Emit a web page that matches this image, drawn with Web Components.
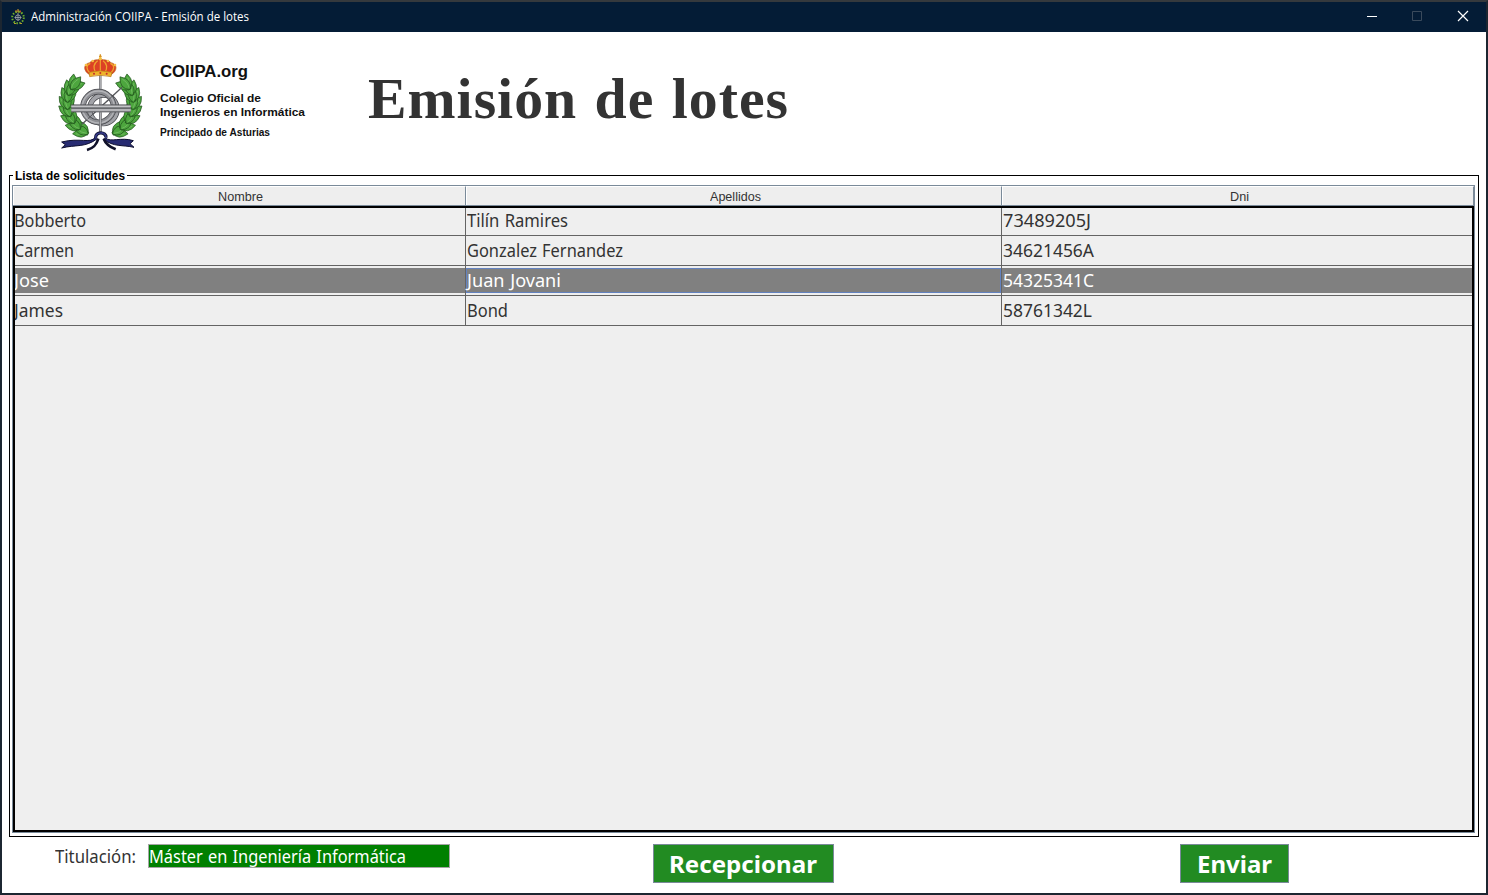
<!DOCTYPE html>
<html lang="es">
<head>
<meta charset="utf-8">
<title>Administración COIIPA - Emisión de lotes</title>
<style>
html,body{margin:0;height:100%;overflow:hidden;background:#1c2127}
</style>
</head>
<body>
<app-window></app-window>
<script>
const define=(name,html,init)=>customElements.define(name,class extends HTMLElement{
  constructor(){super();this.attachShadow({mode:'open'}).innerHTML=html;}
  connectedCallback(){if(init)init.call(this,this.shadowRoot);}
});

/* Text run whose glyphs are condensed or widened to fill the width given in "w". */
define('fit-text',`<style>:host{display:inline-block;white-space:pre}span{display:inline-block;transform-origin:0 0}</style><span><slot></slot></span>`,function(r){
  const s=r.querySelector('span'),w=+this.getAttribute('w');
  this.style.width=w+'px';
  s.style.transform='scaleX('+w/s.getBoundingClientRect().width+')';
});

define('coiipa-emblem',`<style>:host{display:block}svg{display:block;width:100%;height:100%}</style>
<svg viewBox="0 0 300 318">
 <g fill="none" stroke="#2f7a29" stroke-width="14"><path d="M112 250C36 215 38 120 86 96"/><path d="M190 250C266 215 264 120 216 96"/></g>
 <g id="leaves" fill="#4da63e" stroke="#1b4a18" stroke-width="1.8"></g>
 <path d="M96 223L216 112" stroke="#55565a" stroke-width="4"/>
 <path d="M151 76V250" stroke="#66676b" stroke-width="7"/><path d="M151 76V250" stroke="#b9babd" stroke-width="3"/>
 <g fill="none">
  <ellipse cx="160" cy="178" rx="41" ry="43" stroke="#45464b" stroke-width="16"/>
  <ellipse cx="160" cy="178" rx="41" ry="43" stroke="#a2a3a8" stroke-width="12"/>
  <ellipse cx="145" cy="171" rx="46" ry="46" stroke="#45464b" stroke-width="17"/>
  <ellipse cx="145" cy="171" rx="46" ry="46" stroke="#8e8f94" stroke-width="13"/>
  <ellipse cx="145" cy="171" rx="48" ry="48" stroke="#b4b5b9" stroke-width="4"/>
 </g>
 <path d="M113 207L190 136" stroke="#55565a" stroke-width="3"/>
 <path d="M64 165H242V186H64Z" fill="#88898d"/>
 <path d="M64 169H242M64 180H242" stroke="#c3c4c7" stroke-width="4"/>
 <path d="M64 164H242M64 175H242M64 186H242" stroke="#4f5054" stroke-width="2"/>
 <path d="M151 188V250" stroke="#66676b" stroke-width="7"/><path d="M151 188V250" stroke="#c2c3c6" stroke-width="3"/>
 <path d="M147 19h8M151 13v14" stroke="#d89325" stroke-width="4"/>
 <path d="M119 74C98 62 100 42 119 38C128 29 139 30 151 28C163 30 175 29 183 38C202 42 204 62 183 74Z" fill="#dc4225" stroke="#b86920" stroke-width="2"/>
 <path d="M121 70C107 57 108 45 121 40M137 68C129 53 130 41 143 32M165 68C173 53 172 41 159 32M181 70C195 57 194 45 181 40M151 29V68" fill="none" stroke="#efa52d" stroke-width="3.500"/>
 <path d="M117 67Q151 58 186 67L183 80Q151 72 119 80Z" fill="#efb32c" stroke="#b47618" stroke-width="2"/>
 <g fill="#f7c045"><circle cx="108" cy="45" r="4"/><circle cx="128" cy="33" r="4"/><circle cx="151" cy="26" r="5"/><circle cx="174" cy="33" r="4"/><circle cx="195" cy="45" r="4"/></g>
 <g fill="#c72e2a"><circle cx="132" cy="71" r="3"/><circle cx="151" cy="69" r="3"/><circle cx="170" cy="71" r="3"/></g>
 <g fill="none" stroke-linejoin="round">
  <path d="M136 262C120 282 90 262 35 276L46 284L35 294C78 283 104 294 142 266M165 263C183 279 212 260 250 272L240 281L252 292C218 284 190 292 160 267" fill="#272b72" stroke="#0d0e30" stroke-width="3"/>
  <path d="M137 264C134 244 170 244 168 263" stroke="#0d0e30" stroke-width="10"/>
  <path d="M137 264C134 244 170 244 168 263" stroke="#353a87" stroke-width="5"/>
  <path d="M145 266C140 284 132 294 111 300M161 266C167 282 177 290 197 298" stroke="#101129" stroke-width="8"/>
 </g>
</svg>`,function(r){
  const B=(t,a,b,c,d)=>(1-t)**3*a+3*(1-t)**2*t*b+3*(1-t)*t*t*c+t**3*d;
  const P=t=>[B(t,112,36,38,86),B(t,250,215,120,96)];
  let h='';
  for(let i=0;i<=7;i++){
    const t=.02+i*.118,[x,y]=P(t),[u,v]=P(t+.01),a=Math.atan2(v-y,u-x)*180/Math.PI;
    for(const k of [-33,33,0]){
      h+=`<g transform="translate(${x} ${y}) rotate(${a+k})"><path d="M-9 0Q12 -25 40 0Q12 25 -9 0Z"/><path d="M-3 -1Q12 -8 30 -1" fill="none" stroke="#7cbf6b" stroke-width="2"/></g>`;
    }
  }
  r.querySelector('#leaves').innerHTML=h+`<g transform="translate(302 0) scale(-1 1)">${h}</g>`;
});

define('title-bar',`<style>
:host{display:flex;height:30px;background:#041c36;color:#fff;font:12px/30px "Open Sans",sans-serif;align-items:center}
.mark{width:16px;height:16px;margin:0 5px 0 8px}
fit-text{height:30px}
.btns{margin:0 -1px 0 auto;display:flex}
.btns svg{width:46px;height:30px;display:block}
</style>
<svg class="mark" viewBox="0 0 16 16"><path d="M5 2.500h6" stroke="#e25a26" stroke-width="2" stroke-dasharray="2 .6"/><path d="M8 0v3" stroke="#d8a12c"/><circle cx="8" cy="8.500" r="5.800" fill="none" stroke="#6fae2c" stroke-width="2" stroke-dasharray="1.500 1.500"/><circle cx="8" cy="8.500" r="2.600" fill="none" stroke="#8d8f96"/><path d="M4.500 8.500h7M8 4v8" stroke="#a7a9ae" stroke-width=".8"/><path d="M4 14.500h2m4 0h2" stroke="#b39b2b"/></svg>
<fit-text w="218">Administración COIIPA - Emisión de lotes</fit-text>
<div class="btns">
<svg><path d="M18 14.500h10" stroke="#fff"/></svg>
<svg><path d="M17.500 9.500h9v9h-9z" fill="none" stroke="#3a4a5c"/></svg>
<svg><path d="M17 9l10 10M27 9l-10 10" stroke="#fff" stroke-width="1.200"/></svg>
</div>`);

define('page-header',`<style>
:host{display:flex;height:143px;box-sizing:border-box;padding:18px 0 0 48px}
coiipa-emblem{width:100px;height:106px}
.org{margin-left:10px;width:208px;color:#111;font:bold 11px/14px "Liberation Sans",sans-serif;display:flex;flex-direction:column;align-items:flex-start}
.org .a{font-size:16px;line-height:20px;margin-top:12px}
.org .b{margin-top:9px}
.org .d{font-size:10px;line-height:12px;margin-top:8px}
h1{margin:16px 0 0;color:#333;font:bold 57px/66px "Liberation Serif",serif;letter-spacing:1px;word-spacing:2px}
</style>
<coiipa-emblem></coiipa-emblem>
<div class="org"><fit-text class="a" w="88">COIIPA.org</fit-text><fit-text class="b" w="101">Colegio Oficial de</fit-text><fit-text class="c" w="145">Ingenieros en Informática</fit-text><fit-text class="d" w="110">Principado de Asturias</fit-text></div>
<h1><fit-text w="421">Emisión de lotes</fit-text></h1>`);

define('group-box',`<style>
:host{display:block}
fieldset{margin:0;padding:3px 3px 3px 2px;border:1px solid #000;height:669px;box-sizing:border-box;min-width:0}
legend{padding:0 2px;margin-left:1px;height:14px;font:bold 12px/17px "Liberation Sans",sans-serif;color:#000}
</style><fieldset><legend><fit-text w="110">Lista de solicitudes</fit-text></legend><slot></slot></fieldset>`);

define('data-table',`<style>
:host{display:block;height:648px;box-sizing:border-box;border:1px solid #7a8a99;background:#efefef;color:#333}
.head{display:grid;grid-template-columns:453px 536px 1fr;grid-template-rows:19px;height:20px;font:12px/20px "Liberation Sans",sans-serif;text-align:center;background:#eee;box-sizing:border-box;border-bottom:1px solid #7a8a99}
.head div{box-sizing:border-box;border-right:1px solid #7a8a99;border-top:1px solid #fff;box-shadow:inset 1px 0 #fff;padding-left:1px}
.head div:last-child{padding-left:3px}
.body{box-sizing:border-box;height:626px;border:2px solid #000;overflow:hidden;font:18px/28px "Noto Sans",sans-serif;word-spacing:1px}
.row{display:grid;grid-template-columns:451px 536px 1fr;height:30px}
.row:first-child{height:28px;line-height:24px}
.row div{box-sizing:border-box;border-right:1px solid #646464;border-bottom:1px solid #646464;padding-left:1px;white-space:nowrap}
.row div:first-child{padding-left:0}
.row div:first-child fit-text{margin-left:-1px}
.row div:last-child{border-right:0}
.sel{color:#fff;background:linear-gradient(#efefef 2px,#808080 2px 27px,#efefef 27px)}
.sel .focus{background:linear-gradient(#6382bf,#6382bf) 0 2px/100% 1px no-repeat,linear-gradient(#6382bf,#6382bf) 0 26px/100% 1px no-repeat,linear-gradient(#6382bf,#6382bf) 0 2px/1px 25px no-repeat,linear-gradient(#6382bf,#6382bf) 100% 2px/1px 25px no-repeat;background-clip:padding-box}
</style>
<div class="head"><div><fit-text w="45">Nombre</fit-text></div><div><fit-text w="51">Apellidos</fit-text></div><div><fit-text w="19">Dni</fit-text></div></div>
<div class="body">
<div class="row"><div><fit-text w="72">Bobberto</fit-text></div><div><fit-text w="101">Tilín Ramires</fit-text></div><div><fit-text w="88">73489205J</fit-text></div></div>
<div class="row"><div><fit-text w="60">Carmen</fit-text></div><div><fit-text w="156">Gonzalez Fernandez</fit-text></div><div><fit-text w="91">34621456A</fit-text></div></div>
<div class="row sel"><div><fit-text w="35">Jose</fit-text></div><div class="focus"><fit-text w="94">Juan Jovani</fit-text></div><div><fit-text w="91">54325341C</fit-text></div></div>
<div class="row"><div><fit-text w="49">James</fit-text></div><div><fit-text w="41">Bond</fit-text></div><div><fit-text w="89">58761342L</fit-text></div></div>
</div>`);

define('action-button',`<style>
:host{display:block}
button{display:block;width:100%;height:39px;padding:0 1px 0 0;border:1px solid #7a8a99;background:#228b22;color:#fff;font:bold 24px/35px "Noto Sans",sans-serif;border-radius:0;text-align:center}
</style><button><slot></slot></button>`);

define('footer-bar',`<style>
:host{display:flex;align-items:flex-start;padding:7px 0 0 53px;color:#333;font:18px/24px "Noto Sans",sans-serif;word-spacing:1px}
.field{box-sizing:border-box;width:302px;height:24px;margin-left:12px;border:1px solid #a5a5a5;background:#008000;color:#fff;line-height:22px}
.r{width:181px;margin-left:203px}.e{width:109px;margin-left:346px}
</style><fit-text w="81">Titulación:</fit-text><div class="field"><fit-text w="257">Máster en Ingeniería Informática</fit-text></div>
<action-button class="r"><fit-text w="148">Recepcionar</fit-text></action-button>
<action-button class="e"><fit-text w="75">Enviar</fit-text></action-button>`);

define('app-window',`<style>
:host{display:flex;flex-direction:column;box-sizing:border-box;width:1488px;height:895px;border:2px solid #1c2631;border-top-color:#35393d;background:#fff}
.main{background:#fff;flex:1;min-height:0}
group-box{margin:-7px 7px 0}
</style>
<title-bar></title-bar>
<div class="main"><page-header></page-header>
<group-box><data-table></data-table></group-box>
<footer-bar></footer-bar></div>`);
</script>
</body>
</html>
